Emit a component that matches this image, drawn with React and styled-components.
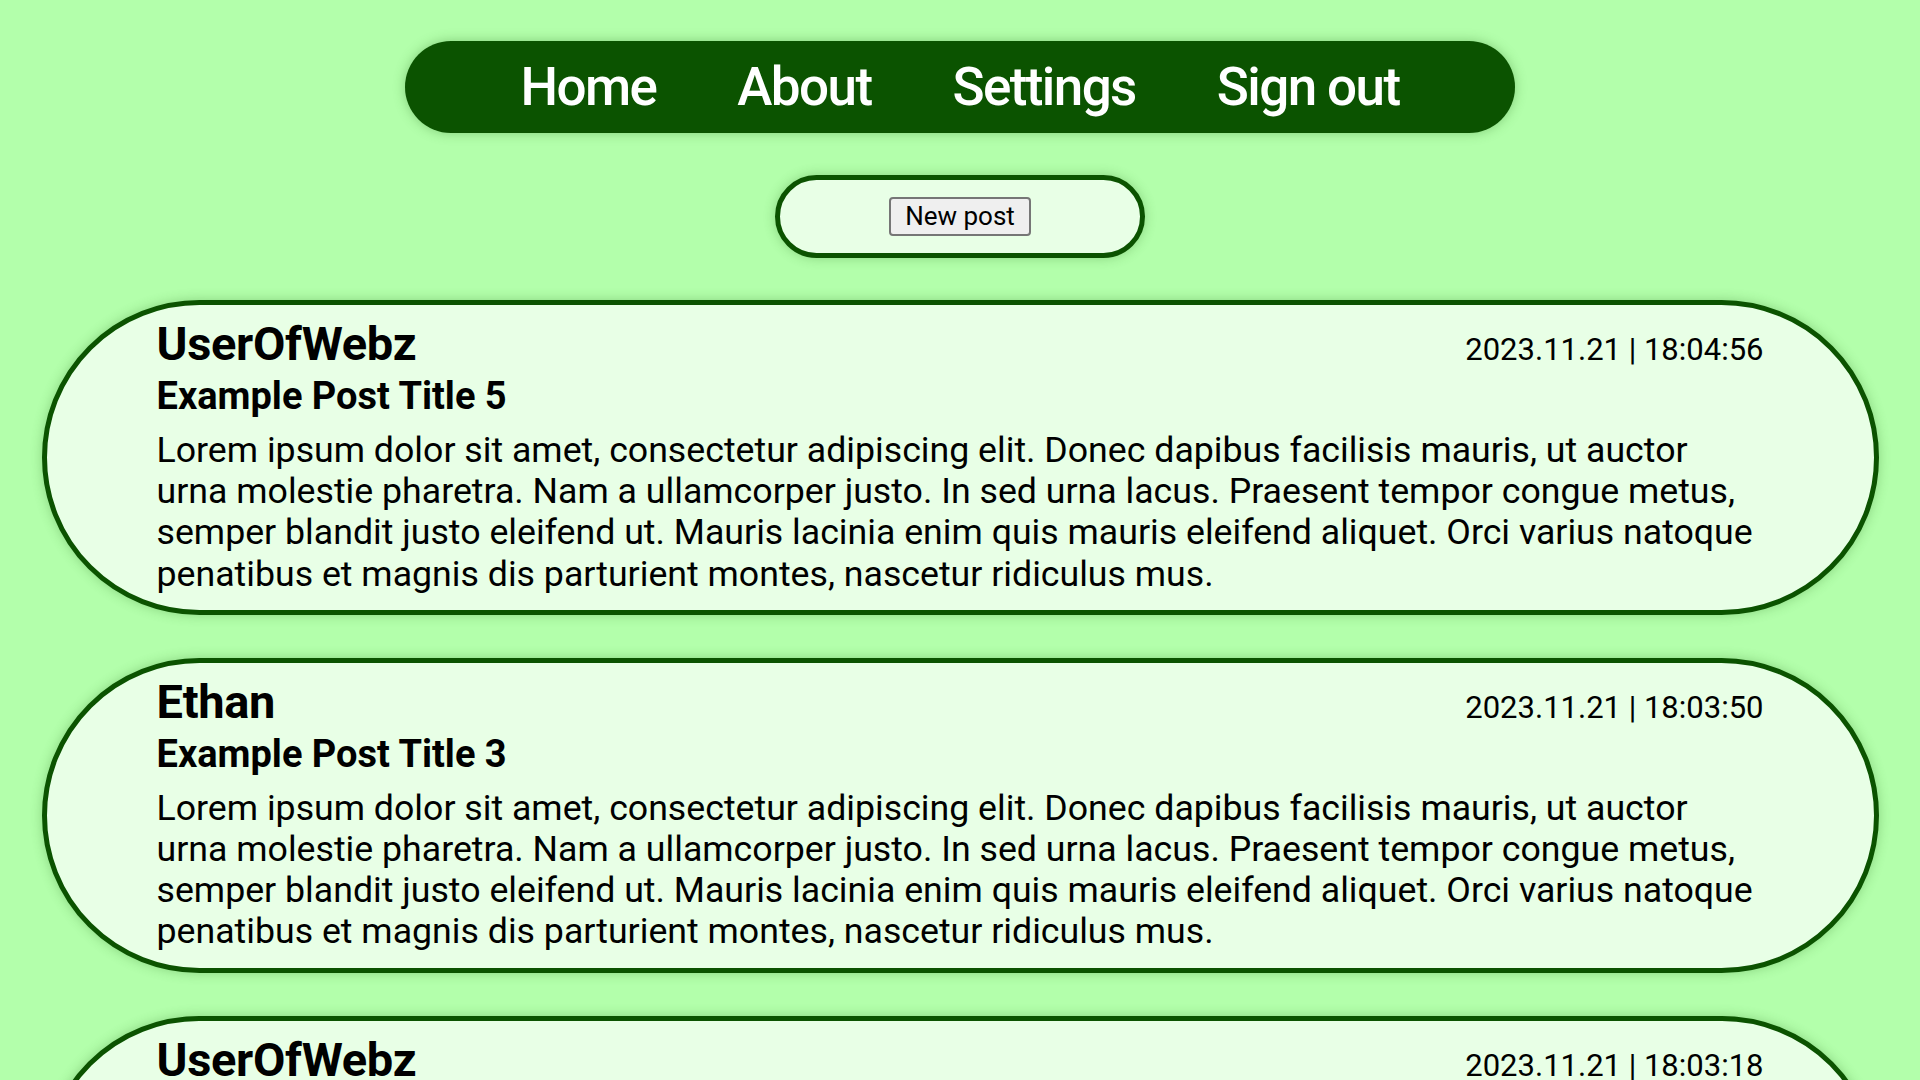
import React from "react";
import styled, { createGlobalStyle } from "styled-components";

const GlobalStyle = createGlobalStyle`
  html, body {
    margin: 0;
    padding: 0;
    background: #b3ffab;
    font-family: Roboto, "Noto Sans", Arial, sans-serif;
    color: #000;
  }
  * { box-sizing: border-box; }
`;

const Page = styled.div`
  display: flex;
  flex-direction: column;
  align-items: center;
  padding: 41px 0 40px;
`;

const Nav = styled.nav`
  width: 1110px;
  height: 92px;
  background: #0b5300;
  border-radius: 46px;
  display: flex;
  align-items: center;
  justify-content: center;
  gap: 81px;
  box-shadow: 0 0 12px rgba(40, 110, 30, 0.35);
`;

const NavLink = styled.a`
  color: #ffffff;
  font-size: 53px;
  font-weight: 500;
  letter-spacing: -1.6px;
  text-decoration: none;
  line-height: 1;
  cursor: pointer;
`;

const NewPostBar = styled.div`
  margin-top: 42px;
  width: 370px;
  height: 83px;
  border: 5px solid #0b5300;
  border-radius: 42px;
  background: #e8ffe6;
  display: flex;
  align-items: center;
  justify-content: center;
  box-shadow: 0 0 12px rgba(40, 110, 30, 0.3);
`;

const Button = styled.button`
  font-family: Roboto, Arial, sans-serif;
  font-size: 26px;
  line-height: 31px;
  padding: 2px 14px;
  background: #efefef;
  color: #000;
  border: 2px solid #767676;
  border-radius: 4px;
  cursor: pointer;
`;

const Feed = styled.div`
  margin-top: 42px;
  width: 1837px;
  display: flex;
  flex-direction: column;
  gap: 43px;
`;

const Post = styled.article`
  border: 5px solid #0b5300;
  border-radius: 9999px;
  background: #e8ffe6;
  padding: 14px 110px 15px 110px;
  box-shadow: 0 0 12px rgba(40, 110, 30, 0.3);
`;

const PostHeader = styled.div`
  display: flex;
  justify-content: space-between;
  align-items: baseline;
`;

const Author = styled.h2`
  margin: 0;
  font-size: 47px;
  line-height: 50px;
  font-weight: 700;
  letter-spacing: -0.3px;
`;

const Stamp = styled.span`
  font-size: 31px;
  font-weight: 400;
`;

const Title = styled.h3`
  margin: 6px 0 0;
  font-size: 38px;
  line-height: 42px;
  font-weight: 700;
`;

const Body = styled.p`
  margin: 13px 0 0;
  font-size: 35.7px;
  line-height: 41.2px;
`;

const LOREM =
  "Lorem ipsum dolor sit amet, consectetur adipiscing elit. Donec dapibus facilisis mauris, ut auctor urna molestie pharetra. Nam a ullamcorper justo. In sed urna lacus. Praesent tempor congue metus, semper blandit justo eleifend ut. Mauris lacinia enim quis mauris eleifend aliquet. Orci varius natoque penatibus et magnis dis parturient montes, nascetur ridiculus mus.";

const posts = [
  { author: "UserOfWebz", title: "Example Post Title 5", stamp: "2023.11.21 | 18:04:56" },
  { author: "Ethan", title: "Example Post Title 3", stamp: "2023.11.21 | 18:03:50" },
  { author: "UserOfWebz", title: "Example Post Title 2", stamp: "2023.11.21 | 18:03:18" },
];

export default function App() {
  return (
    <>
      <GlobalStyle />
      <Page>
        <Nav>
          <NavLink>Home</NavLink>
          <NavLink>About</NavLink>
          <NavLink>Settings</NavLink>
          <NavLink>Sign out</NavLink>
        </Nav>
        <NewPostBar>
          <Button>New post</Button>
        </NewPostBar>
        <Feed>
          {posts.map((p, i) => (
            <Post key={i}>
              <PostHeader>
                <Author>{p.author}</Author>
                <Stamp>{p.stamp}</Stamp>
              </PostHeader>
              <Title>{p.title}</Title>
              <Body>{LOREM}</Body>
            </Post>
          ))}
        </Feed>
      </Page>
    </>
  );
}
